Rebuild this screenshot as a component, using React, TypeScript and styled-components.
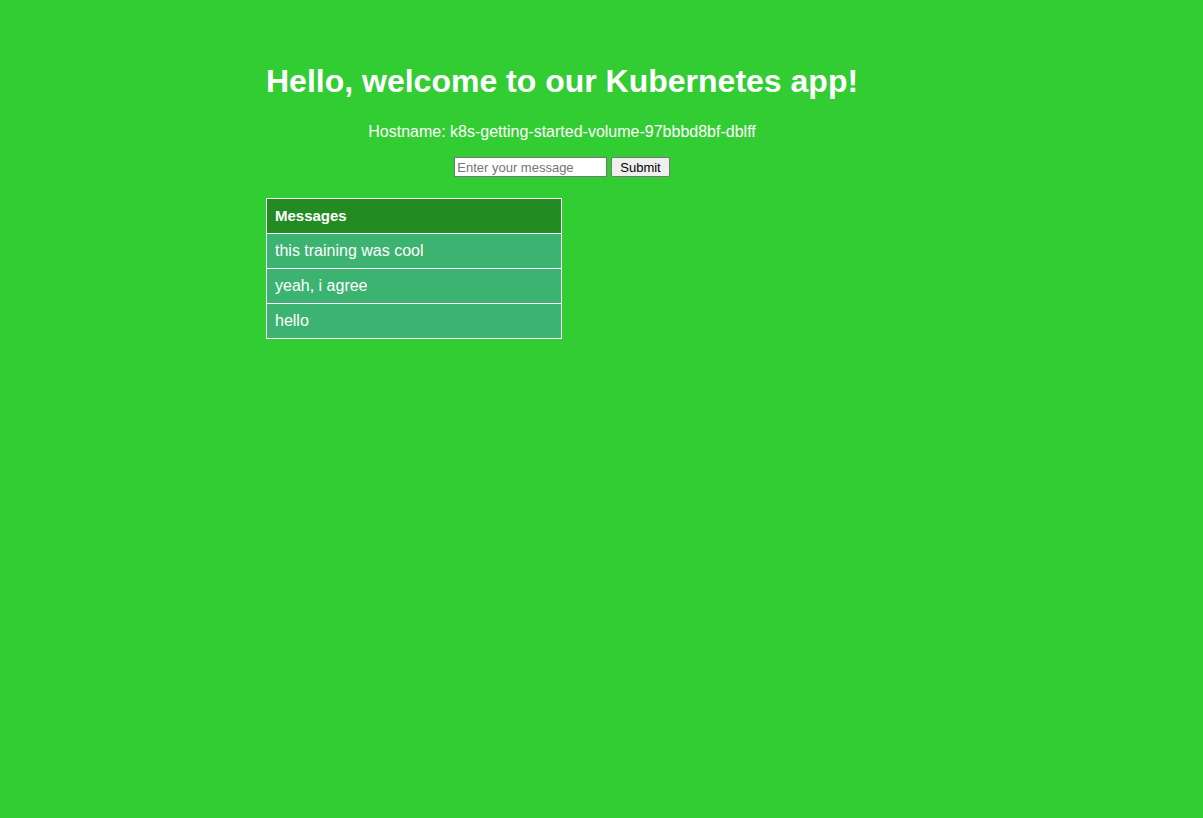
import styled, { createGlobalStyle } from 'styled-components';

const GlobalStyle = createGlobalStyle`
  html, body {
    margin: 0;
    padding: 0;
    background-color: #32cd32;
    font-family: "Liberation Sans", Arial, sans-serif;
    color: #fff;
  }
`;

const messages = ['this training was cool', 'yeah, i agree', 'hello'];

function App() {
  return (
    <>
      <GlobalStyle />
      <Page>
        <Content>
          <Title>Hello, welcome to our Kubernetes app!</Title>
          <Hostname>Hostname: k8s-getting-started-volume-97bbbd8bf-dblff</Hostname>
          <MessageForm onSubmit={(e) => e.preventDefault()}>
            <MessageInput type="text" placeholder="Enter your message" />
            <SubmitButton type="submit">Submit</SubmitButton>
          </MessageForm>
          <MessageTable>
            <thead>
              <tr>
                <HeadCell>Messages</HeadCell>
              </tr>
            </thead>
            <tbody>
              {messages.map((msg, i) => (
                <tr key={i}>
                  <Cell>{msg}</Cell>
                </tr>
              ))}
            </tbody>
          </MessageTable>
        </Content>
      </Page>
    </>
  );
}

export default App;

const Page = styled.div`
  min-height: 818px;
  padding: 63px 0 0 266px;
  box-sizing: border-box;
`;

const Content = styled.div`
  width: 592px;
`;

const Title = styled.h1`
  margin: 0;
  font-size: 32px;
  line-height: 37px;
  font-weight: bold;
  text-align: center;
  white-space: nowrap;
`;

const Hostname = styled.p`
  margin: 23px 0 0;
  font-size: 16px;
  line-height: 18px;
  text-align: center;
`;

const MessageForm = styled.form`
  margin: 16px 0 0;
  display: flex;
  justify-content: center;
  align-items: center;
  gap: 4px;
`;

const MessageInput = styled.input`
  width: 153px;
  height: 20px;
  box-sizing: border-box;
  padding: 1px 2px;
  font-family: "Liberation Sans", Arial, sans-serif;
  font-size: 13px;
  border: 1px solid #767676;
  background: #fff;
  &::placeholder {
    color: #757575;
  }
`;

const SubmitButton = styled.button`
  height: 20px;
  box-sizing: border-box;
  padding: 0 8px;
  font-family: "Liberation Sans", Arial, sans-serif;
  font-size: 13px;
  color: #000;
  background: #efefef;
  border: 1px solid #767676;
  border-radius: 2px;
`;

const MessageTable = styled.table`
  margin-top: 21px;
  width: 296px;
  border-collapse: collapse;
  font-size: 16px;
`;

const HeadCell = styled.th`
  background-color: #228b22;
  border: 1px solid #fff;
  padding: 8px;
  line-height: 18px;
  text-align: left;
  font-size: 15px;
`;

const Cell = styled.td`
  background-color: #3cb371;
  border: 1px solid #fff;
  padding: 8px;
  line-height: 18px;
  text-align: left;
`;
